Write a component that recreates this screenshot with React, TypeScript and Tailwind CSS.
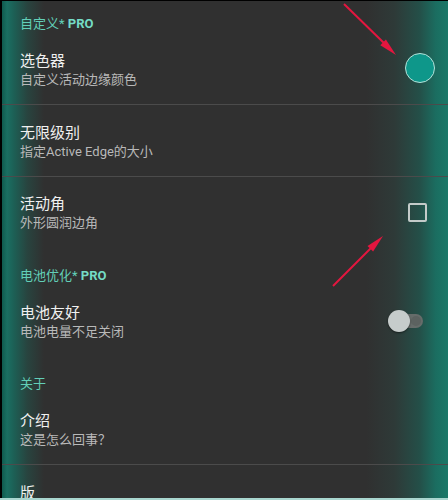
import React from "react";

const font = { fontFamily: 'Roboto, "Noto Sans CJK SC", sans-serif' };

function Header({ cn, children }: { cn: string; children: React.ReactNode }) {
  return (
    <div className={`pl-[18px] text-[13px] leading-[20px] text-[#62cfb8] ${cn}`}>{children}</div>
  );
}

function Row({
  title,
  sub,
  cn,
  right,
}: {
  title: string;
  sub?: string;
  cn: string;
  right?: React.ReactNode;
}) {
  return (
    <div className={`flex items-center pl-[18px] ${cn}`}>
      <div className="flex-1 flex flex-col">
        <div className="text-[15px] leading-[20px] text-[#f0f0f0]">{title}</div>
        {sub && <div className="text-[13px] leading-[18px] text-[#b9b9b9]">{sub}</div>}
      </div>
      {right}
    </div>
  );
}

function Divider() {
  return <div className="h-[1px] bg-[#4b4b4b] w-full" />;
}

export default function App() {
  return (
    <div style={font} className="w-[448px] h-[500px] flex flex-col bg-black overflow-hidden">
      <div className="relative flex-1 overflow-hidden bg-[#303030] mt-[1px] ml-[2px]">
        {/* edge glows */}
        <div className="absolute left-0 top-0 bottom-0 w-[42px] bg-[linear-gradient(to_right,#0f5a4e_0%,#1a6f62_12%,#1d5e54_30%,#28443f_60%,rgba(48,48,48,0)_100%)]" />
        <div className="absolute right-0 top-0 bottom-0 w-[82px] bg-[linear-gradient(to_right,rgba(48,48,48,0)_0%,#2e3a38_35%,#244f48_65%,#1b6d60_85%,#1a7868_100%)]" />

        <div className="relative flex flex-col">
          <Header cn="mt-[13px]">
            自定义* <span className="font-bold text-[#74dcc6]">PRO</span>
          </Header>
          <Row
            title="选色器"
            sub="自定义活动边缘颜色"
            cn="pt-[17px] pb-[15px]"
            right={
              <div className="w-[30px] h-[30px] rounded-full bg-[#0e978a] border-[1.5px] border-[#b4e2da] mr-[13px] mb-[5px]" />
            }
          />
          <Divider />
          <Row title="无限级别" sub="指定Active Edge的大小" cn="pt-[18px] pb-[15px]" />
          <Divider />
          <Row
            title="活动角"
            sub="外形圆润边角"
            cn="pt-[17px]"
            right={
              <div className="w-[19px] h-[19px] border-2 border-[#c3cbc9] rounded-[2px] mr-[21px] mb-[2px]" />
            }
          />
          <Header cn="mt-[34px]">
            电池优化* <span className="font-bold text-[#74dcc6]">PRO</span>
          </Header>
          <Row
            title="电池友好"
            sub="电池电量不足关闭"
            cn="pt-[17px]"
            right={
              <div className="relative w-[35px] h-[22px] mr-[25px] mb-[3px]">
                <div className="absolute left-[7px] right-0 top-[4px] h-[14px] rounded-full bg-[#666c6a]">
                  <div className="absolute right-[2px] top-[2px] w-[10px] h-[10px] rounded-full bg-[#5c6260]" />
                </div>
                <div className="absolute left-0 top-0 w-[22px] h-[22px] rounded-full bg-[#c6cccb] shadow-[0_1px_2px_rgba(0,0,0,0.5)]" />
              </div>
            }
          />
          <Header cn="mt-[33px]">关于</Header>
          <Row title="介绍" sub="这是怎么回事？" cn="pt-[17px] pb-[15px]" />
          <Divider />
          <Row title="版" cn="pt-[18px]" />
        </div>

        {/* red annotation arrows */}
        <svg className="absolute left-[-2px] top-[-1px] pointer-events-none" width="448" height="500" viewBox="0 0 448 500">
          <line x1="344" y1="4" x2="386" y2="45" stroke="#e4163f" strokeWidth="2" />
          <polygon points="396,55 380.3,45.3 385.9,39.5" fill="#e4163f" />
          <line x1="333" y1="286" x2="373" y2="246" stroke="#e4163f" strokeWidth="2" />
          <polygon points="383,236 373.1,251.5 367.5,245.9" fill="#e4163f" />
        </svg>
      </div>
      <div className="h-[2px] bg-[#a9d6cf]" />
    </div>
  );
}
